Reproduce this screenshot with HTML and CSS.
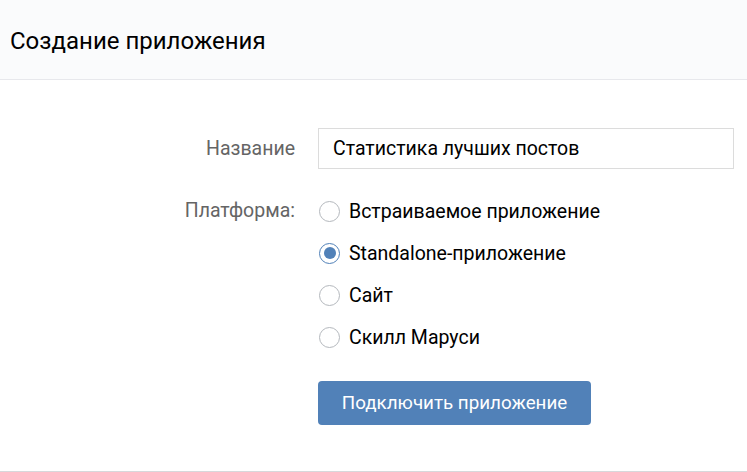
FILE: index.html
```html
<!DOCTYPE html>
<html lang="ru">
<head>
<meta charset="utf-8">
<title>Создание приложения</title>
<link rel="stylesheet" href="styles.css">
</head>
<body>
<div class="page">
  <header class="header">
    <h1 class="title">Создание приложения</h1>
  </header>
  <main class="form">
    <div class="row row-input">
      <div class="label">Название</div>
      <div class="control">
        <div class="input">Статистика лучших постов</div>
      </div>
    </div>
    <div class="row">
      <div class="label label-radio">Платформа:</div>
      <div class="control">
        <div class="radios">
          <div class="radio"><span class="circle"></span><span class="radio-text">Встраиваемое приложение</span></div>
          <div class="radio"><span class="circle checked"></span><span class="radio-text">Standalone-приложение</span></div>
          <div class="radio"><span class="circle"></span><span class="radio-text">Сайт</span></div>
          <div class="radio"><span class="circle"></span><span class="radio-text">Скилл Маруси</span></div>
        </div>
        <div class="actions">
          <button class="button" type="button">Подключить приложение</button>
        </div>
      </div>
    </div>
  </main>
  <footer class="footer"></footer>
</div>
</body>
</html>
```
FILE: styles.css
```css
html, body {
  margin: 0;
  padding: 0;
  background: #ffffff;
}
body {
  font-family: Roboto, "Liberation Sans", Arial, sans-serif;
  color: #000000;
}
.page {
  width: 747px;
  height: 472px;
  display: flex;
  flex-direction: column;
}
.header {
  height: 79px;
  background: #fafbfc;
  border-bottom: 1px solid #e7e8ec;
  display: flex;
  align-items: center;
  padding-left: 10px;
}
.title {
  margin: 0;
  font-size: 24px;
  font-weight: 400;
  color: #000000;
  padding-top: 2px;
}
.form {
  padding-top: 48px;
  padding-right: 13px;
  display: flex;
  flex-direction: column;
  gap: 21px;
  flex: 1;
}
.row {
  display: grid;
  grid-template-columns: 295px 1fr;
  column-gap: 23px;
}
.label {
  text-align: right;
  color: #656565;
  font-size: 19.5px;
}
.row-input .label {
  line-height: 41px;
}
.label-radio {
  line-height: 42px;
}
.input {
  height: 39px;
  border: 1px solid #dcdcdc;
  line-height: 39px;
  padding-left: 14px;
  font-size: 19.5px;
}
.radios {
  display: flex;
  flex-direction: column;
}
.radio {
  height: 42px;
  display: flex;
  align-items: center;
  gap: 9px;
  font-size: 19.5px;
}
.circle {
  width: 19px;
  height: 19px;
  border: 1.3px solid #b4b8bd;
  border-radius: 50%;
  margin-left: 1px;
  box-sizing: content-box;
  flex: none;
  display: flex;
  align-items: center;
  justify-content: center;
}
.circle.checked {
  border-color: #5181b8;
}
.circle.checked::after {
  content: "";
  width: 12px;
  height: 12px;
  border-radius: 50%;
  background: #5181b8;
}
.actions {
  padding-top: 23px;
}
.button {
  height: 44px;
  width: 273px;
  border: none;
  border-radius: 4px;
  background: #5181b8;
  color: #ffffff;
  font-family: Roboto, "Liberation Sans", Arial, sans-serif;
  font-size: 18.8px;
  padding: 0;
  cursor: pointer;
}
.footer {
  height: 1px;
  background: #d7d8db;
}
```
